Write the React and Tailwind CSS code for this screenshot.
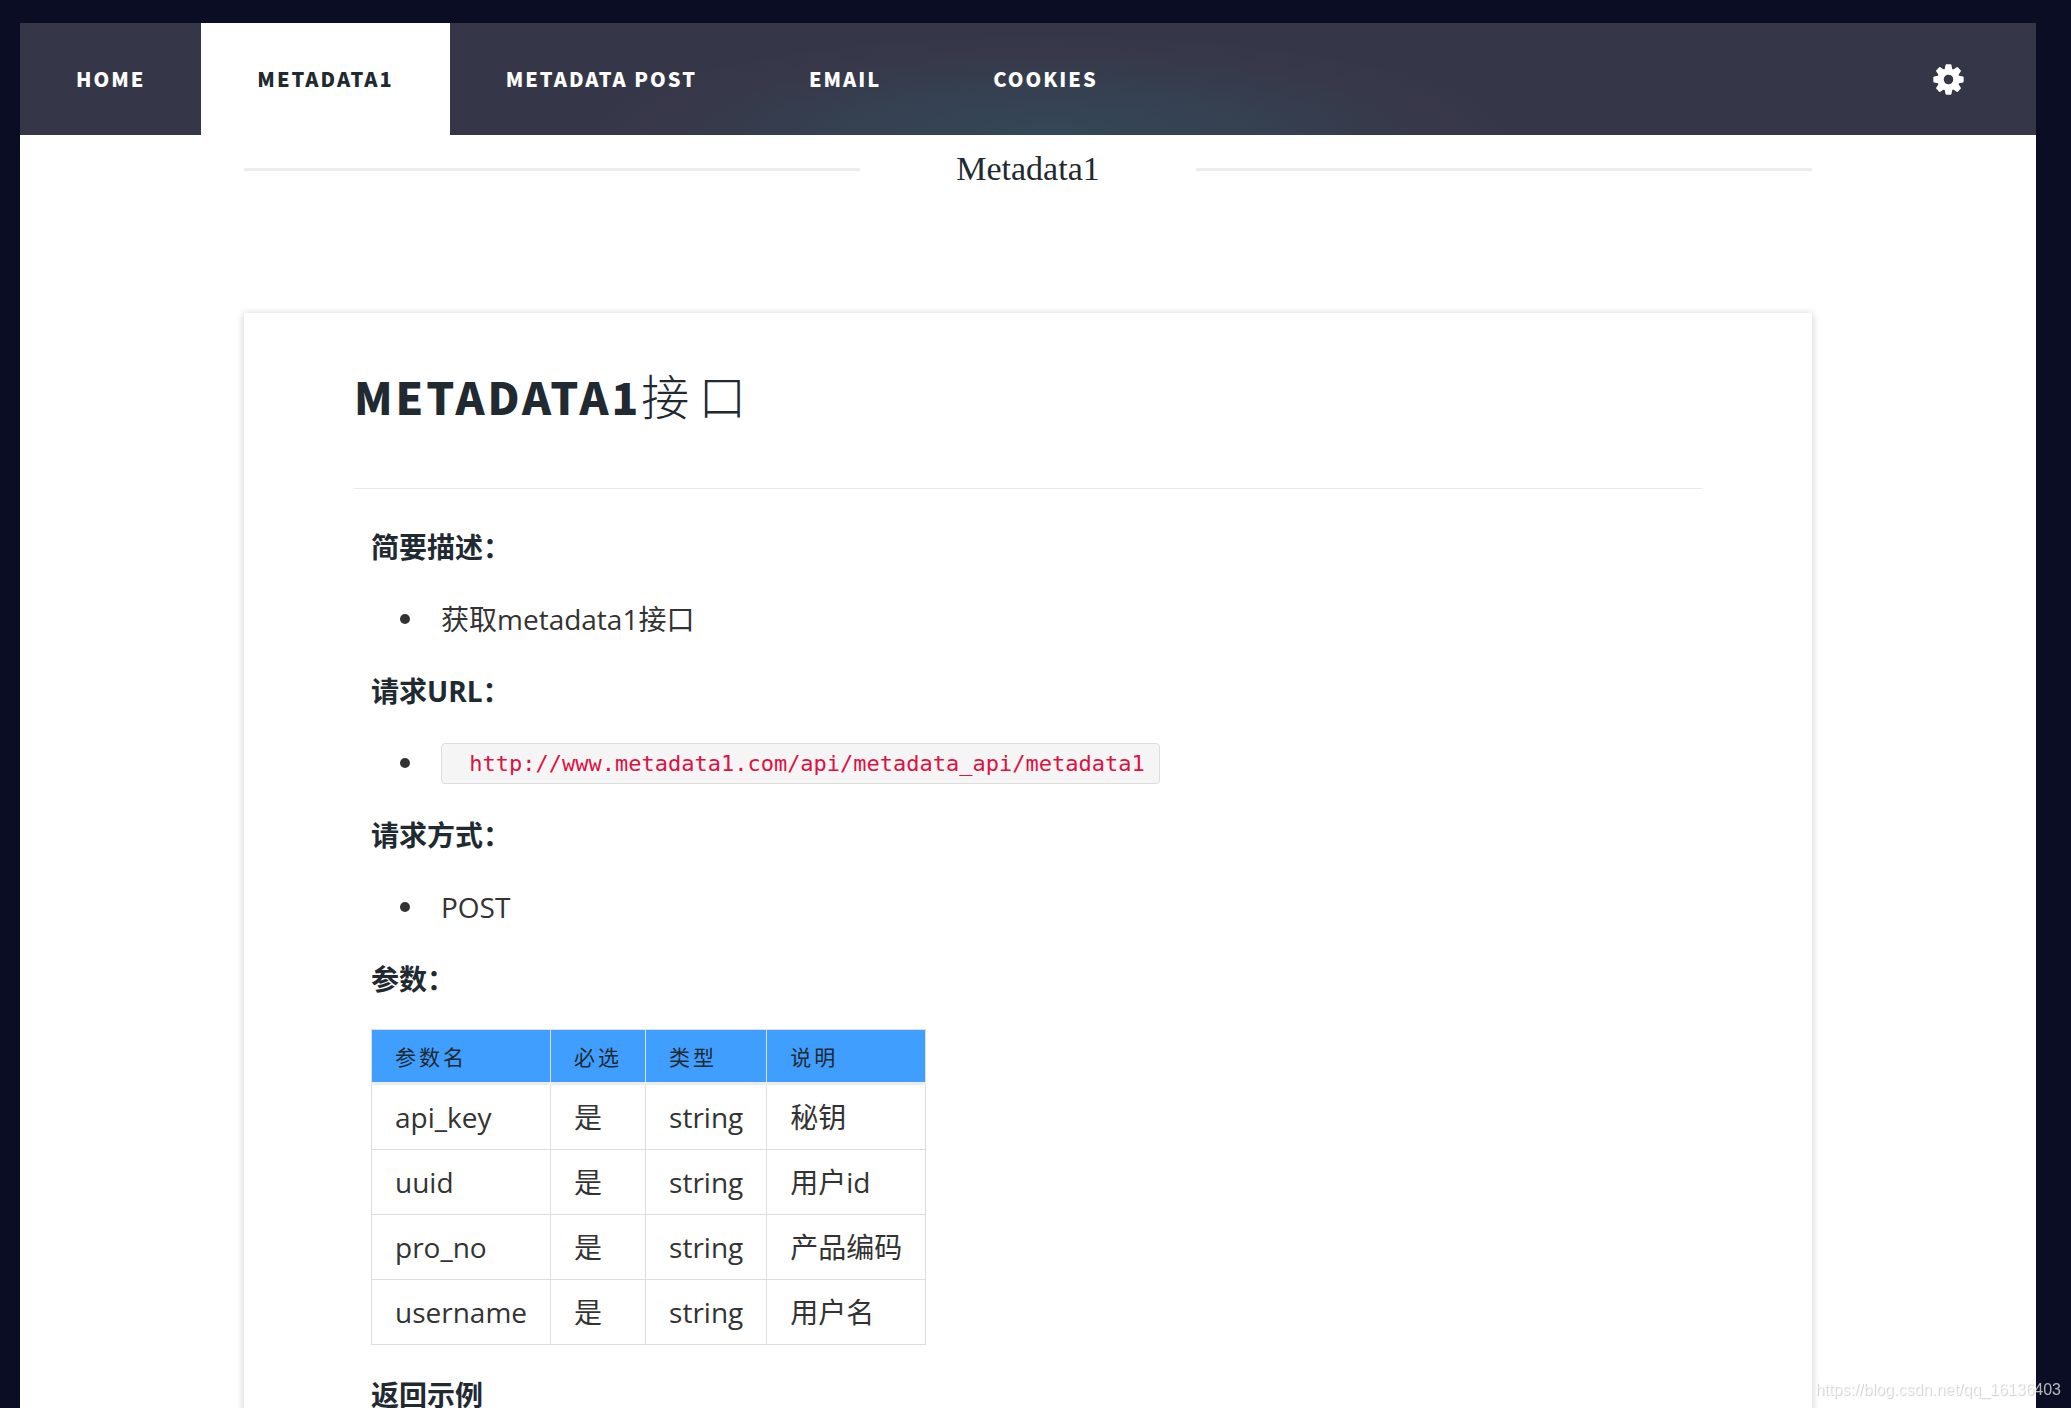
const links = [
  { label: 'Home', href: '#home' },
  { label: 'Metadata1', href: '#metadata1', active: true },
  { label: 'Metadata post', href: '#metadata-post' },
  { label: 'Email', href: '#email' },
  { label: 'Cookies', href: '#cookies' },
];

const params = [
  { name: 'api_key', required: '是', type: 'string', desc: '秘钥' },
  { name: 'uuid', required: '是', type: 'string', desc: '用户id' },
  { name: 'pro_no', required: '是', type: 'string', desc: '产品编码' },
  { name: 'username', required: '是', type: 'string', desc: '用户名' },
];

function GearIcon() {
  return (
    <svg viewBox="-47 -47 94 94" className="size-[31px]" fill="currentColor" aria-hidden="true">
      <circle r="24" fill="none" stroke="currentColor" strokeWidth="19" />
      {[0, 45, 90, 135, 180, 225, 270, 315].map((angle) => (
        <path
          key={angle}
          transform={`rotate(${angle})`}
          d="M-12 -28 L-9 -44 Q-8 -46 -6 -46 L6 -46 Q8 -46 9 -44 L12 -28 Z"
        />
      ))}
    </svg>
  );
}

function Navbar() {
  return (
    <nav className="flex h-28 items-stretch justify-between bg-white/[0.175] bg-[radial-gradient(ellipse_460px_100px_at_51%_100%,rgba(52,84,100,0.55),rgba(54,76,90,0.4)_50%,rgba(58,64,78,0.3)_75%,rgba(62,56,76,0.25)_88%,transparent)]">
      <div className="flex">
        {links.map((link) => (
          <a
            key={link.label}
            href={link.href}
            className={
              link.active
                ? 'flex items-center bg-white px-14 text-[20px] font-black uppercase tracking-[2px] text-[#212931]'
                : 'flex items-center px-14 text-[20px] font-black uppercase tracking-[2px] text-white'
            }
          >
            {link.label}
          </a>
        ))}
      </div>
      <button type="button" aria-label="Settings" className="mr-[72px] text-white">
        <GearIcon />
      </button>
    </nav>
  );
}

function Label({ children }) {
  return <h4 className="mb-7 text-[28px] leading-[44px] font-bold text-[#212931]">{children}</h4>;
}

function Item({ children }) {
  return (
    <ul className="mb-7 pl-[29px]">
      <li className="flex min-h-11 items-center text-[28px] leading-[44px]">
        <span className="mr-[31px] size-[10px] rounded-full bg-[#333333]" />
        {children}
      </li>
    </ul>
  );
}

function ParamsTable() {
  return (
    <table className="mb-7 border-collapse text-[28px] leading-[44px]">
      <thead>
        <tr className="border-b-3 border-b-[#ededed] bg-[#409eff] font-['Noto_Sans_CJK_SC',sans-serif] text-[21px] leading-[52px] tracking-[3px] text-[#212931]">
          {['参数名', '必选', '类型', '说明'].map((title) => (
            <th key={title} className="border-x border-t border-[#dddddd] px-[23px] text-left font-normal">
              {title}
            </th>
          ))}
        </tr>
      </thead>
      <tbody>
        {params.map((row) => (
          <tr key={row.name}>
            <td className="border border-[#dddddd] px-[23px] py-[10px]">{row.name}</td>
            <td className="border border-[#dddddd] px-[23px] py-[10px]">{row.required}</td>
            <td className="border border-[#dddddd] px-[23px] py-[10px]">{row.type}</td>
            <td className="border border-[#dddddd] px-[23px] py-[10px]">{row.desc}</td>
          </tr>
        ))}
      </tbody>
    </table>
  );
}

export default function App() {
  return (
    <div className="h-screen overflow-hidden bg-[#0a0d23] pt-[23px] pr-[35px] pl-5 font-['Noto_Sans_CJK_SC',sans-serif]">
      <Navbar />
      <main className="min-h-full bg-white px-56">
        <div className="flex items-center pt-2">
          <div className="h-[3px] flex-1 bg-[#ededed]" />
          <h1 className="w-[336px] text-center font-['Liberation_Serif',serif] text-[34px] leading-[52px] text-[#212931]">
            Metadata1
          </h1>
          <div className="h-[3px] flex-1 bg-[#ededed]" />
        </div>
        <article className="mt-[118px] bg-white px-[110px] pt-[45px] shadow-[0_1px_8px_rgba(0,0,0,0.2)]">
          <h2 className="border-b border-[#e8e8e8] pb-14 text-[44px] leading-[72px] font-black tracking-[3px] text-[#212931]">
            METADATA1<span className="text-[48px] font-light tracking-[9px]">接口</span>
          </h2>
          <section className="px-[17px] pt-9 font-['Open_Sans','Noto_Sans_CJK_SC',sans-serif] text-[#333333]">
            <Label>简要描述：</Label>
            <Item>获取metadata1接口</Item>
            <Label>请求URL：</Label>
            <Item>
              <code className="rounded-[4px] border border-[#dddddd] bg-[#f5f5f5] px-[14px] font-['DejaVu_Sans_Mono',monospace] text-[22px] leading-[39px] whitespace-pre text-[#dd1144]">
                {' http://www.metadata1.com/api/metadata_api/metadata1'}
              </code>
            </Item>
            <Label>请求方式：</Label>
            <Item>POST</Item>
            <Label>参数：</Label>
            <ParamsTable />
            <Label>返回示例</Label>
          </section>
        </article>
      </main>
      <span className="fixed right-[10px] bottom-[6px] font-['Liberation_Sans',sans-serif] text-[16px] text-white/70 [text-shadow:1px_1px_1px_rgba(0,0,0,0.2)]">
        https://blog.csdn.net/qq_16136403
      </span>
    </div>
  );
}
